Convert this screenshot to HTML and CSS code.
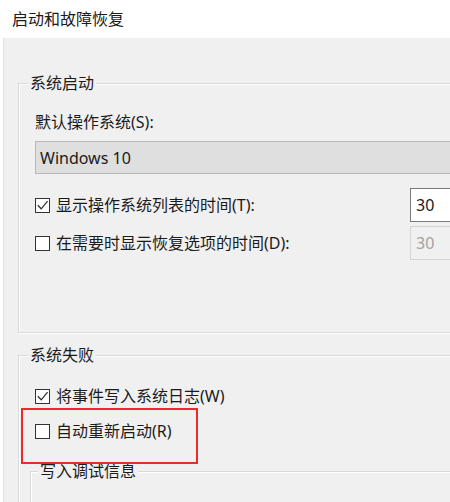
FILE: index.html
```html
<!DOCTYPE html>
<html lang="zh-CN">
<head>
<meta charset="utf-8">
<title>启动和故障恢复</title>
<link rel="stylesheet" href="styles.css">
</head>
<body>
<div class="header">启动和故障恢复</div>
<div class="panel">
  <fieldset class="group group-start">
    <legend>系统启动</legend>
    <div class="label">默认操作系统(S):</div>
    <div class="combo">Windows 10</div>
    <div class="opt-row first">
      <label class="check">
        <svg class="box" width="15" height="15" viewBox="0 0 15 15"><rect x="0.5" y="0.5" width="14" height="14" fill="#fff" stroke="#333"/><polyline points="2.8,7.2 6.2,10.8 12.6,3.2" fill="none" stroke="#333" stroke-width="1.3"/></svg>
        <span>显示操作系统列表的时间(T):</span>
      </label>
      <div class="num">30</div>
    </div>
    <div class="opt-row">
      <label class="check">
        <svg class="box" width="15" height="15" viewBox="0 0 15 15"><rect x="0.5" y="0.5" width="14" height="14" fill="#fff" stroke="#333"/></svg>
        <span>在需要时显示恢复选项的时间(D):</span>
      </label>
      <div class="num disabled">30</div>
    </div>
  </fieldset>

  <fieldset class="group group-fail">
    <legend>系统失败</legend>
    <label class="check row-log">
      <svg class="box" width="15" height="15" viewBox="0 0 15 15"><rect x="0.5" y="0.5" width="14" height="14" fill="#fff" stroke="#333"/><polyline points="2.8,7.2 6.2,10.8 12.6,3.2" fill="none" stroke="#333" stroke-width="1.3"/></svg>
      <span>将事件写入系统日志(W)</span>
    </label>
    <label class="check row-restart">
      <svg class="box" width="15" height="15" viewBox="0 0 15 15"><rect x="0.5" y="0.5" width="14" height="14" fill="#fff" stroke="#333"/></svg>
      <span>自动重新启动(R)</span>
    </label>
    <fieldset class="group group-debug">
      <legend>写入调试信息</legend>
    </fieldset>
  </fieldset>
</div>
<div class="highlight"></div>
</body>
</html>
```

FILE: styles.css
```css
html, body {
  margin: 0;
  padding: 0;
}
body {
  width: 450px;
  height: 502px;
  overflow: hidden;
  background: #ffffff;
  font-family: "Noto Sans", "Noto Sans CJK SC", sans-serif;
  font-size: 16px;
  line-height: 20px;
  color: #1b1b1b;
  position: relative;
}
.header {
  height: 38px;
  box-sizing: border-box;
  padding: 9px 0 0 12px;
  background: #ffffff;
}
.panel {
  margin-left: 3px;
  border-left: 1px solid #e2e2e2;
  background: #f0f0f0;
  height: 464px;
  box-sizing: border-box;
  padding: 35px 0 0 14px;
  overflow: hidden;
}
.group {
  margin: 0;
  width: 480px;
  box-sizing: border-box;
  border: 1px solid #d9d9d9;
  box-shadow: inset 1px 1px 0 #ffffff, 1px 1px 0 #ffffff;
  padding: 0 0 0 16px;
  min-width: 0;
}
.group legend {
  padding: 0 2px;
  margin-left: -7px;
  background: #f0f0f0;
  line-height: 20px;
}
.group-start {
  padding-bottom: 72px;
}
.label {
  margin-top: 19px;
}
.combo {
  margin-top: 9px;
  height: 33px;
  box-sizing: border-box;
  border: 1px solid #b8b8b8;
  background: #dfdfdf;
  padding-left: 4px;
  display: flex;
  align-items: center;
}
.opt-row {
  display: flex;
  align-items: center;
  margin-top: 4px;
}
.opt-row.first {
  margin-top: 14px;
}
.opt-row .check {
  flex: 0 0 375px;
}
.check {
  display: flex;
  align-items: center;
  gap: 6px;
}
.box {
  flex: 0 0 15px;
  display: block;
}
.num {
  width: 80px;
  height: 34px;
  box-sizing: border-box;
  border: 1px solid #7a7a7a;
  background: #ffffff;
  padding-left: 5px;
  display: flex;
  align-items: center;
}
.num.disabled {
  border-color: #d4d4d4;
  background: #f0f0f0;
  color: #a3a3a3;
}
.group-fail {
  margin-top: 12px;
  height: 200px;
}
.row-log {
  margin-top: 21px;
}
.row-restart {
  margin-top: 15px;
}
.group-debug {
  margin-top: 20px;
  margin-left: -5px;
  width: 460px;
  height: 80px;
}
.group-debug legend {
  margin-left: -9px;
}
.highlight {
  position: absolute;
  left: 21px;
  top: 408px;
  width: 177px;
  height: 56px;
  box-sizing: border-box;
  border: 2px solid #ec2a2a;
}
```
